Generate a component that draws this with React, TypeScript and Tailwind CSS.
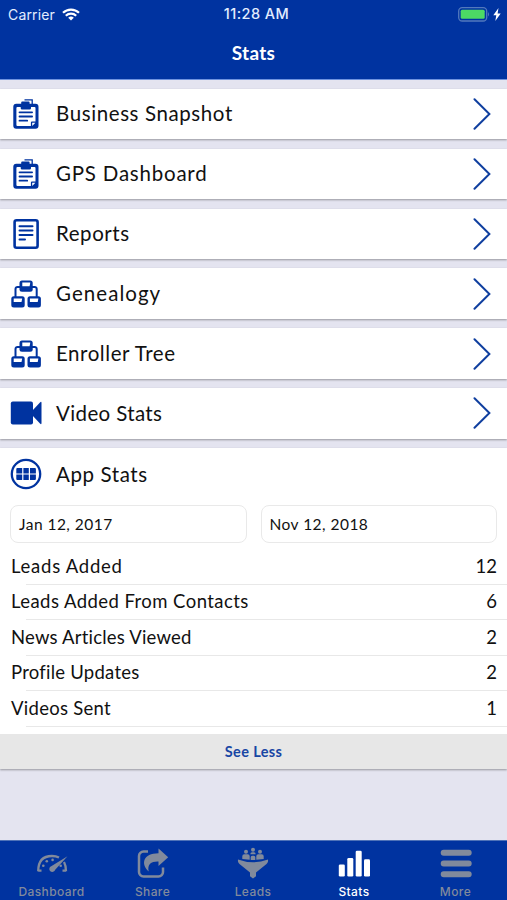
import type { ReactNode } from "react";

type IconProps = { className?: string };

function ClipboardIcon({ className }: IconProps) {
  return (
    <svg width="28" height="32" viewBox="0 0 28 32" className={className}>
      <path d="M12.500 1.900h7.700v5" fill="none" stroke="#0033a0" strokeWidth="1.300" />
      <path
        d="M4.300 5.800h4.900V4.400q0-1 1-1h6.400q1 0 1 1v1.400h5.900a3 3 0 0 1 3 3v19a3 3 0 0 1-3 3H4.300a3 3 0 0 1-3-3v-19a3 3 0 0 1 3-3z"
        fill="#0033a0"
      />
      <path
        d="M5.400 9h3.300v1.200q0 1.300 1.300 1.300h7.700q1.300 0 1.300-1.300V9h3.500q1 0 1 1v13.600h-3.600q-1 0-1 1v3.500H5.400q-1 0-1-1V10q0-1 1-1z"
        fill="#fff"
      />
      <path
        d="M7.500 14.300h12.600M7.500 18.500h12.600M7.500 22.700h7.700"
        stroke="#0033a0"
        strokeWidth="1.800"
        strokeLinecap="round"
      />
      <path d="M20.200 28v-3.200h3.200z" fill="#fff" />
    </svg>
  );
}

function ReportIcon({ className }: IconProps) {
  return (
    <svg width="28" height="32" viewBox="0 0 28 32" className={className}>
      <rect x="2.600" y="2.200" width="23" height="27.600" rx="2" fill="none" stroke="#0033a0" strokeWidth="2.600" />
      <path
        d="M7.500 8.200h13M7.500 12.600h13M7.500 17h13M7.500 21.400h5.500"
        stroke="#0033a0"
        strokeWidth="2"
        strokeLinecap="round"
      />
    </svg>
  );
}

function TreeIcon({ className }: IconProps) {
  return (
    <svg width="32" height="30" viewBox="0 0 32 30" className={className}>
      <path
        d="M11 7.900H7.500a2 2 0 0 0-2 2V19M21 7.900h3.700a2 2 0 0 1 2 2V19"
        fill="none"
        stroke="#0033a0"
        strokeWidth="2"
      />
      <rect x="9.500" y="1.500" width="13.200" height="11.200" rx="2.500" fill="#0033a0" />
      <rect x="1.300" y="17.300" width="13.400" height="11.200" rx="2.500" fill="#0033a0" />
      <rect x="17.500" y="17.300" width="13.400" height="11.200" rx="2.500" fill="#0033a0" />
      <path
        d="M12.300 3.600h8l-.7 3.700h-7.300zM3.700 19.400h8.500l-.7 3.500H3.700zM19.900 19.400h8.500l-.7 3.500h-7.800z"
        fill="#fff"
      />
    </svg>
  );
}

function VideoIcon({ className }: IconProps) {
  return (
    <svg width="32" height="26" viewBox="0 0 32 26" className={className}>
      <rect x="0.800" y="1.500" width="22.200" height="23" rx="2" fill="#0033a0" />
      <path d="M22 11l8-8.600q1.500-1.300 1.500.5v20.200q0 1.800-1.500.5L22 15z" fill="#0033a0" />
    </svg>
  );
}

function AppsIcon({ className }: IconProps) {
  return (
    <svg width="32" height="32" viewBox="0 0 32 32" className={className}>
      <circle cx="16" cy="16" r="14.200" fill="none" stroke="#0033a0" strokeWidth="2.300" />
      <path
        d="M7.300 9.900h4.900v5.500H6.300v-4.500q0-1 1-1zM13.400 9.900h5.400v5.500h-5.400zM20 9.900h4.900q1 0 1 1v4.500H20zM6.300 16.600h5.900v5.500H7.300q-1 0-1-1zM13.400 16.600h5.400v5.500h-5.400zM20 16.600h5.900v4.500q0 1-1 1H20z"
        fill="#0033a0"
      />
    </svg>
  );
}

function Chevron() {
  return (
    <svg width="18" height="32" viewBox="0 0 18 32">
      <path d="M1.500 1.300L16.400 16 1.500 30.700" fill="none" stroke="#103f9f" strokeWidth="2" strokeLinecap="round" />
    </svg>
  );
}

function DashboardIcon() {
  return (
    <svg width="34" height="32" viewBox="0 0 34 32">
      <path
        d="M3.200 24.300C3.200 13 9 9 17 9q4 0 7 1.500M29 15q2 3.500 2 9.300M3.200 23.600h3.300M27.500 23.600H31"
        fill="none"
        stroke="currentColor"
        strokeWidth="2.300"
      />
      <path d="M32.500 9.300L20.200 22.800a3 3 0 1 1-4-3.600z" fill="currentColor" />
      <g fill="currentColor">
        <circle cx="8.300" cy="18.700" r="1.300" />
        <circle cx="11.800" cy="14.300" r="1.300" />
        <circle cx="17.600" cy="12.900" r="1.300" />
        <circle cx="25.700" cy="18.700" r="1.300" />
      </g>
    </svg>
  );
}

function ShareIcon() {
  return (
    <svg width="34" height="32" viewBox="0 0 34 32">
      <path
        d="M12 4.500H7.500A4.500 4.500 0 0 0 3 9v16a4.500 4.500 0 0 0 4.500 4.500h15A4.500 4.500 0 0 0 27 25v-4.500"
        fill="none"
        stroke="currentColor"
        strokeWidth="2.500"
      />
      <path d="M22.500 1.500l9.700 8.700-9.700 8.700v-4.500c-7-.3-11.500 2.500-9.800 10C4.500 17 7 6.300 22.500 6.200z" fill="currentColor" />
    </svg>
  );
}

function LeadsIcon() {
  return (
    <svg width="34" height="32" viewBox="0 0 34 32">
      <path
        d="M2 12.500q15 5.500 30 0c.3 2.300-.4 3.500-1.500 4.500L20 25.500v3.800L17 31.500l-3-2.200v-3.800L3.500 17C2.400 16 1.700 14.800 2 12.500z"
        fill="currentColor"
      />
      <g fill="currentColor">
        <circle cx="10" cy="4.700" r="2" />
        <circle cx="17" cy="2.700" r="2" />
        <circle cx="24" cy="4.700" r="2" />
        <path d="M6.300 12V9.300q0-2 2-2h3.400q2 0 2 2v3.500zM14.300 7.200q.2-1.900 1.700-1.900h2q1.600 0 1.700 1.900zM20.300 12.800V9.300q0-2 2-2h3.400q2 0 2 2V12zM14.700 13v-2.800q0-1.500 1.500-1.500h1.600q1.500 0 1.500 1.500V13z" />
      </g>
    </svg>
  );
}

function StatsIcon() {
  return (
    <svg width="34" height="32" viewBox="0 0 34 32">
      <g fill="currentColor">
        <rect x="1.800" y="17.500" width="6" height="12" rx="1.300" />
        <rect x="10.300" y="10.900" width="6" height="18.600" rx="1.300" />
        <rect x="18.700" y="3.700" width="6" height="25.800" rx="1.300" />
        <rect x="27" y="12.200" width="6" height="17.300" rx="1.300" />
      </g>
    </svg>
  );
}

function MoreIcon() {
  return (
    <svg width="34" height="32" viewBox="0 0 34 32">
      <path d="M4.700 5.700h25M4.700 16.500h25M4.700 27.300h25" stroke="currentColor" strokeWidth="6" strokeLinecap="round" />
    </svg>
  );
}

const menu: { label: string; icon: ReactNode; tracking: string }[] = [
  { label: "Business Snapshot", icon: <ClipboardIcon />, tracking: "tracking-[0.6px]" },
  { label: "GPS Dashboard", icon: <ClipboardIcon />, tracking: "tracking-[0.78px]" },
  { label: "Reports", icon: <ReportIcon />, tracking: "tracking-[0.55px]" },
  { label: "Genealogy", icon: <TreeIcon />, tracking: "tracking-[1.05px]" },
  { label: "Enroller Tree", icon: <TreeIcon />, tracking: "tracking-[0.55px]" },
  { label: "Video Stats", icon: <VideoIcon />, tracking: "tracking-[0.37px]" },
];

const stats = [
  { label: "Leads Added", value: 12, tracking: "tracking-[0.75px]" },
  { label: "Leads Added From Contacts", value: 6, tracking: "tracking-[0.44px]" },
  { label: "News Articles Viewed", value: 2, tracking: "tracking-[0.2px]" },
  { label: "Profile Updates", value: 2, tracking: "tracking-[0.24px]" },
  { label: "Videos Sent", value: 1, tracking: "tracking-[0.27px]" },
];

const tabs = [
  { label: "Dashboard", icon: <DashboardIcon /> },
  { label: "Share", icon: <ShareIcon /> },
  { label: "Leads", icon: <LeadsIcon /> },
  { label: "Stats", icon: <StatsIcon />, active: true },
  { label: "More", icon: <MoreIcon /> },
];

function StatusBar() {
  return (
    <div className="grid h-7 grid-cols-3 items-center pr-[6px] pl-2 font-['Inter',sans-serif] text-[14px] text-[#e3edff]">
      <div className="flex items-center gap-[7px]">
        <span className="tracking-[0.15px]">Carrier</span>
        <svg width="18" height="13" viewBox="0 0 18 13">
          <path
            d="M1 4.800a11.500 11.500 0 0 1 16 0M3.800 7.700a7.500 7.500 0 0 1 10.400 0"
            fill="none"
            stroke="#fff"
            strokeWidth="2.200"
          />
          <path d="M9 12.500L6.200 9.800a4 4 0 0 1 5.600 0z" fill="#fff" />
        </svg>
      </div>
      <div className="pl-1 text-center text-[14.500px] font-medium tracking-[0.45px] whitespace-nowrap">11:28 AM</div>
      <div className="flex items-center justify-end gap-[3px]">
        <svg width="32" height="15" viewBox="0 0 32 15">
          <rect x="0.700" y="0.700" width="28" height="13.300" rx="3.500" fill="none" stroke="#5279bd" strokeWidth="1.300" />
          <rect x="2.700" y="2.800" width="24" height="9" rx="1.500" fill="#4cd964" />
          <path d="M30 5q2 2.300 0 4.600z" fill="#5279bd" />
        </svg>
        <svg width="8" height="13" viewBox="0 0 8 13">
          <path d="M5.500 0L.3 7.300h3L2.300 13 7.700 5.500H4.600z" fill="#fff" />
        </svg>
      </div>
    </div>
  );
}

export default function App() {
  return (
    <div className="flex h-[900px] w-[507px] flex-col overflow-hidden bg-[#e4e4f0] font-['Lato',sans-serif] text-[#111]">
      <header className="h-20 border-b border-[#6f93df] bg-[#0033a0]">
        <StatusBar />
        <h1 className="pt-[11px] text-center text-[19px] leading-7 font-bold tracking-[0.3px] text-white">Stats</h1>
      </header>

      <main className="flex flex-1 flex-col pt-[8.800px]">
        {menu.map((item) => (
          <div
            key={item.label}
            className="mb-[9.500px] flex h-[50.400px] items-center bg-white pr-4 shadow-[0_1px_2px_rgba(0,0,0,0.35)]"
          >
            <span className="flex w-[52px] justify-center">{item.icon}</span>
            <span className={`flex-1 pb-px pl-1 text-[20.500px] ${item.tracking}`}>{item.label}</span>
            <Chevron />
          </div>
        ))}

        <section className="bg-white shadow-[0_1px_2px_rgba(0,0,0,0.35)]">
          <div className="flex h-[51px] items-center pt-px">
            <span className="flex w-[52px] justify-center">
              <AppsIcon />
            </span>
            <span className="pl-1 text-[20.500px] tracking-[0.6px]">App Stats</span>
          </div>
          <div className="grid h-[50px] grid-cols-2 items-center gap-[14px] px-[10px] text-[15.500px] tracking-[0.47px]">
            <div className="flex h-[38px] items-center rounded-lg border border-[#e9e9e9] pl-2">Jan 12, 2017</div>
            <div className="flex h-[38px] items-center rounded-lg border border-[#e9e9e9] pl-2">Nov 12, 2018</div>
          </div>
          <ul className="text-[18.500px]">
            {stats.map((row) => (
              <li key={row.label} className="flex h-[35.500px]">
                <span className="w-[26px]" />
                <div className="flex flex-1 items-center justify-between border-b border-[#e8e8e8] pr-[10px]">
                  <span className={`-ml-[15px] ${row.tracking}`}>{row.label}</span>
                  <span>{row.value}</span>
                </div>
              </li>
            ))}
          </ul>
          <div className="mt-[7px] flex h-[35.500px] items-center justify-center bg-[#e7e7e7] text-[14.500px] font-bold tracking-[0.35px] text-[#1846a4]">
            See Less
          </div>
        </section>
      </main>

      <nav className="grid h-[60px] grid-cols-[103px_99px_102px_100px_103px] border-t border-[#4e72b8] bg-[#0033a0] font-['Inter',sans-serif] text-[12px] font-medium">
        {tabs.map((tab) => (
          <div
            key={tab.label}
            className={`flex flex-col items-center pt-[6px] ${tab.active ? "text-white" : "text-[#818a9c]"}`}
          >
            {tab.icon}
            <span className="mt-[5px] leading-4 tracking-[0.4px]">{tab.label}</span>
          </div>
        ))}
      </nav>
    </div>
  );
}
